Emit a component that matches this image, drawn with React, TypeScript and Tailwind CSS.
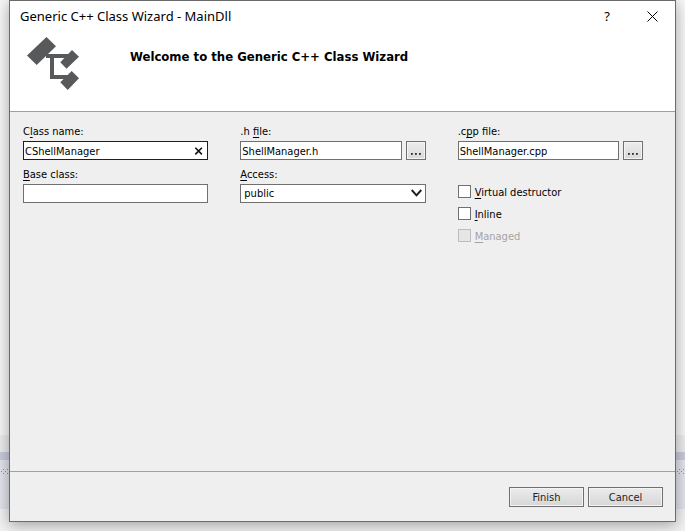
import { useState, type ReactNode } from "react";

const field =
  "h-[19px] w-full min-w-0 rounded-none border bg-white px-px pt-px text-[11px] leading-4 text-black outline-none";

function Label({ id, children }: { id: string; children: ReactNode }) {
  return (
    <label htmlFor={id} className="block h-5 pt-[3px] leading-4">
      {children}
    </label>
  );
}

function Key({ children }: { children: string }) {
  return <span className="underline underline-offset-2">{children}</span>;
}

function BrowseButton({ label }: { label: string }) {
  return (
    <button
      type="button"
      aria-label={label}
      className="flex h-[19px] w-5 shrink-0 items-center justify-center border border-[#707070] bg-linear-to-b from-[#ececec] to-[#d9d9d9] inset-ring inset-ring-[#f4f4f4]"
    >
      <svg width="10" height="2" viewBox="0 0 10 2" className="mt-[6px]" fill="#2a2a3c">
        <rect x="0" width="1.8" height="1.8" />
        <rect x="4" width="1.8" height="1.8" />
        <rect x="8" width="1.8" height="1.8" />
      </svg>
    </button>
  );
}

function Option({ id, disabled = false, children }: { id: string; disabled?: boolean; children: ReactNode }) {
  return (
    <div className="flex h-[13px] items-center gap-1">
      <input
        id={id}
        type="checkbox"
        disabled={disabled}
        className="size-[13px] shrink-0 appearance-none border border-[#707070] bg-white checked:bg-[#707070] disabled:border-[#bcbcbc] disabled:bg-[#e6e6e6]"
      />
      <label htmlFor={id} className={disabled ? "pt-[2px] leading-4 text-[#a3a3a3]" : "pt-[2px] leading-4"}>
        {children}
      </label>
    </div>
  );
}

function ActionButton({ children }: { children: string }) {
  return (
    <button
      type="button"
      className="h-5 w-[75px] border border-[#707070] bg-linear-to-b from-[#ececec] to-[#d6d6d6] pt-px leading-4 text-[#1e1e1e] inset-ring inset-ring-[#f4f4f4]"
    >
      {children}
    </button>
  );
}

function Backdrop() {
  return (
    <div className="absolute inset-0 -z-10 flex flex-col bg-[#f7f7f7]">
      <div className="flex-1" />
      <div className="h-[17px] bg-[#ececec]" />
      <div className="h-2 bg-[#c9cbdc]" />
      <div className="h-[49px] bg-[#e3e4ec] pt-2">
        <svg width="100%" height="7" className="block">
          <defs>
            <pattern id="grip" width="4" height="4" patternUnits="userSpaceOnUse">
              <rect x="3" y="1" width="1" height="1" fill="#8f8f98" />
              <rect x="1" y="3" width="1" height="1" fill="#8f8f98" />
            </pattern>
          </defs>
          <rect width="100%" height="7" fill="url(#grip)" />
        </svg>
      </div>
      <div className="h-[22px] bg-[#f2f2f2]" />
    </div>
  );
}

export default function App() {
  const [className, setClassName] = useState("CShellManager");

  return (
    <div className="relative isolate flex h-screen flex-col overflow-hidden px-[9px] pb-[9px] font-['DejaVu_Sans_Condensed','DejaVu_Sans',sans-serif] text-[11px] text-black">
      <Backdrop />
      <main className="flex flex-1 flex-col border border-[#6b6b6b] bg-[#efefef] shadow-[0_3px_14px_rgba(0,0,0,0.35)]">
        <header className="h-[111px] border-b border-[#a0a0a0] bg-white">
          <div className="flex h-[30px] items-center pr-[17px] pl-[10px]">
            <h1 className="flex-1 font-['Noto_Sans',sans-serif] text-[13px] leading-4">
              Generic C++ Class Wizard - MainDll
            </h1>
            <button type="button" aria-label="Help" className="mr-[34px] w-3 font-['Noto_Sans',sans-serif] text-[13px] leading-4">
              ?
            </button>
            <button type="button" aria-label="Close">
              <svg width="11" height="11" viewBox="0 0 11 11" stroke="#000" fill="none">
                <path d="M.5 .5l10 10M10.500 .5l-10 10" />
              </svg>
            </button>
          </div>
          <div className="flex pl-[17px]">
            <svg width="53" height="54" viewBox="0 0 53 54" fill="#58595b" className="mt-[6px]">
              <path d="M19.500 0L29 9.200L9.700 28L0 18.500z" />
              <path d="M45 13l7 6.700L39.500 31.700L33.300 25.300z" />
              <path d="M44.700 34l7.300 7.300L40.700 53L33.300 45.300z" />
              <path d="M19 17h23v4H27v17h14v4H23V21h-4z" />
            </svg>
            <h2 className="mt-[18px] ml-[50px] text-[13px] leading-4 font-bold">
              Welcome to the Generic C++ Class Wizard
            </h2>
          </div>
        </header>

        <section className="grid flex-1 grid-cols-3 content-start gap-x-8 gap-y-1 pt-[9px] pr-8 pl-[13px]">
          <div>
            <Label id="class-name">C<Key>l</Key>ass name:</Label>
            <div className="relative">
              <input
                id="class-name"
                value={className}
                onChange={(e) => setClassName(e.target.value)}
                className={`${field} block border-[#1e1e1e] pr-5`}
              />
              <button
                type="button"
                aria-label="Clear class name"
                onClick={() => setClassName("")}
                className="absolute top-[6px] right-[5px]"
              >
                <svg width="9" height="8" viewBox="0 0 9 8" stroke="#111" strokeWidth="1.6" fill="none">
                  <path d="M1.300 .8l6.600 6.600M7.900 .8l-6.600 6.600" />
                </svg>
              </button>
            </div>
          </div>
          <div>
            <Label id="h-file">.h <Key>f</Key>ile:</Label>
            <div className="flex gap-1">
              <input id="h-file" defaultValue="ShellManager.h" className={`${field} border-[#707070]`} />
              <BrowseButton label="Browse for .h file" />
            </div>
          </div>
          <div>
            <Label id="cpp-file">.c<Key>p</Key>p file:</Label>
            <div className="flex gap-1">
              <input id="cpp-file" defaultValue="ShellManager.cpp" className={`${field} border-[#707070]`} />
              <BrowseButton label="Browse for .cpp file" />
            </div>
          </div>
          <div>
            <Label id="base-class"><Key>B</Key>ase class:</Label>
            <input id="base-class" className={`${field} block border-[#707070]`} />
          </div>
          <div>
            <Label id="access"><Key>A</Key>ccess:</Label>
            <div className="relative">
              <select id="access" className={`${field} block appearance-none border-[#707070] pl-[3px]`}>
                <option>public</option>
                <option>protected</option>
                <option>private</option>
              </select>
              <svg
                width="11"
                height="8"
                viewBox="0 0 11 8"
                fill="none"
                stroke="#1e1e1e"
                strokeWidth="2"
                className="pointer-events-none absolute top-[5px] right-1"
              >
                <path d="M.7 1l4.800 5.300L10.300 1" />
              </svg>
            </div>
          </div>
          <div className="flex flex-col gap-[9px] pt-[21px]">
            <Option id="virtual"><Key>V</Key>irtual destructor</Option>
            <Option id="inline"><Key>I</Key>nline</Option>
            <Option id="managed" disabled><Key>M</Key>anaged</Option>
          </div>
        </section>

        <footer className="flex h-[50px] justify-end gap-1 border-t border-[#a0a0a0] pt-[15px] pr-3">
          <ActionButton>Finish</ActionButton>
          <ActionButton>Cancel</ActionButton>
        </footer>
      </main>
    </div>
  );
}
